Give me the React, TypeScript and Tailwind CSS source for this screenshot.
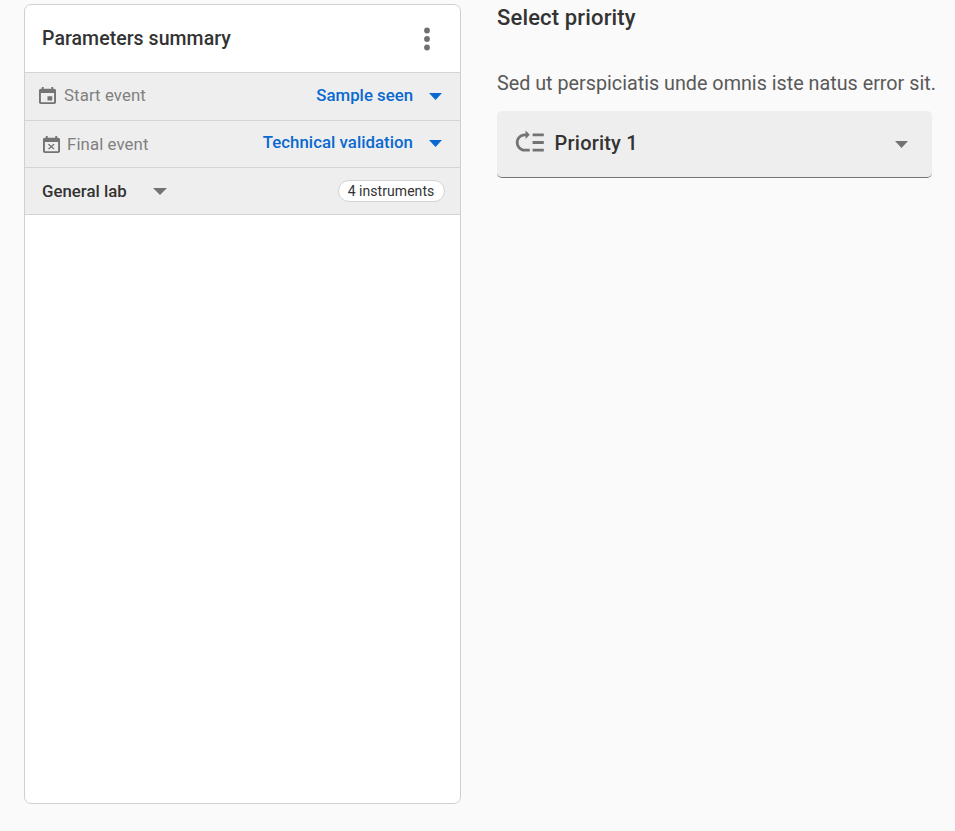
import React from "react";

function Caret({ className }: { className: string }) {
  return (
    <svg viewBox="0 0 14 7" preserveAspectRatio="none" className={`shrink-0 ${className}`} fill="currentColor">
      <path d="M0 0h14L7 7z" />
    </svg>
  );
}

const frame =
  "M19 3h-1V1h-2v2H8V1H6v2H5c-1.11 0-1.99.9-1.99 2L3 19c0 1.1.89 2 2 2h14c1.1 0 2-.9 2-2V5c0-1.1-.9-2-2-2zm0 16H5V8h14v11z";

function CalendarIcon({ mark, className }: { mark: string; className: string }) {
  return (
    <svg
      viewBox="3 1 18 20"
      preserveAspectRatio="none"
      className={`h-[17px] w-[17px] shrink-0 text-[#737373] ${className}`}
      fill="currentColor"
    >
      <path d={mark} />
      <path d={frame} />
    </svg>
  );
}

export default function App() {
  return (
    <div className="flex h-[831px] w-[955px] overflow-hidden bg-[#fafafa] pl-[24px] font-['Roboto',sans-serif] whitespace-nowrap text-[#333]">
      <section className="mt-[4px] flex h-[799.5px] w-[437px] shrink-0 flex-col overflow-hidden rounded-[7px] border border-[#d0d0d0] bg-white">
        <header className="flex h-[67px] shrink-0 items-center justify-between pr-[30.5px] pl-[17px]">
          <h2 className="mt-[1px] text-[19.5px] leading-6 font-medium tracking-[0.05px]">Parameters summary</h2>
          <svg viewBox="0 0 6 24" className="h-6 w-[6px] text-[#707070]" fill="currentColor">
            <circle cx="3" cy="3.5" r="2.9" />
            <circle cx="3" cy="12" r="2.9" />
            <circle cx="3" cy="20.5" r="2.9" />
          </svg>
        </header>
        <div className="flex h-[47.5px] shrink-0 items-center border-t border-[#d4d4d4] bg-[#eee] pr-[18px] pl-[14px]">
          <CalendarIcon className="mb-[1px]" mark="M17 12h-5v5h5v-5z" />
          <span className="mb-[1px] ml-[8px] text-[16.8px] tracking-[0.1px] text-[#808080]">Start event</span>
          <span className="mb-[2px] ml-auto text-[16.8px] font-medium text-[#0a69d0]">Sample seen</span>
          <Caret className="mt-[1px] ml-[16px] h-[7px] w-[13px] text-[#0a69d0]" />
        </div>
        <div className="flex h-[47.5px] shrink-0 items-center border-t border-[#d4d4d4] bg-[#eee] pr-[18px] pl-[18px]">
          <CalendarIcon className="mt-[1px]" mark="M9.31 17l2.44-2.44L14.19 17l1.06-1.06-2.44-2.44 2.44-2.44L14.19 10l-2.44 2.44L9.31 10l-1.06 1.06 2.44 2.44-2.44 2.44L9.31 17z" />
          <span className="mt-[1px] ml-[7px] text-[16.8px] tracking-[0.1px] text-[#808080]">Final event</span>
          <span className="mb-[2px] ml-auto text-[16.8px] font-medium tracking-[0.04px] text-[#0a69d0]">Technical validation</span>
          <Caret className="ml-[16px] h-[7px] w-[13px] text-[#0a69d0]" />
        </div>
        <div className="flex h-[47.5px] shrink-0 items-center border-y border-[#d4d4d4] bg-[#eee] pr-[15.5px] pl-[17px]">
          <span className="mt-[1px] text-[16.8px] font-medium">General lab</span>
          <Caret className="mt-[1px] ml-[26.5px] h-[7px] w-[14px] text-[#737373]" />
          <span className="ml-auto flex h-[22px] w-[107px] items-center justify-center rounded-full border border-[#d4d4d4] bg-white pt-[1px] text-[14px] tracking-[0.05px]">
            4 instruments
          </span>
        </div>
      </section>
      <main className="ml-[36px] w-[435px] shrink-0">
        <h2 className="mt-[5px] text-[22px] leading-[25px] font-medium tracking-[0.15px]">Select priority</h2>
        <p className="mt-[41px] text-[19.75px] leading-[25px] text-[#595959]">
          Sed ut perspiciatis unde omnis iste natus error sit.
        </p>
        <div className="mt-[15px] flex h-[67px] items-center overflow-hidden rounded-[5px] border-b border-[#757575] bg-[#eee] pr-[24px] pl-[16px]">
          <svg viewBox="0 0 24 24" className="mb-[4px] h-[33.6px] w-[33.6px] text-[#737373]" fill="currentColor">
            <path
              transform="matrix(1 0 0 -1 0 24)"
              d="M14 5h8v2h-8zm0 5.5h8v2h-8zm0 5.5h8v2h-8zM2 11.5C2 15.08 4.92 18 8.5 18H9v2l3-3-3-3v2h-.5C6.02 16 4 13.98 4 11.5S6.02 7 8.5 7H12V5H8.5C4.92 5 2 7.92 2 11.5z"
            />
          </svg>
          <span className="mb-[2px] ml-[8px] text-[20px] font-medium tracking-[0.2px]">Priority 1</span>
          <Caret className="mt-[1px] ml-auto h-[7px] w-[13px] text-[#737373]" />
        </div>
      </main>
    </div>
  );
}
